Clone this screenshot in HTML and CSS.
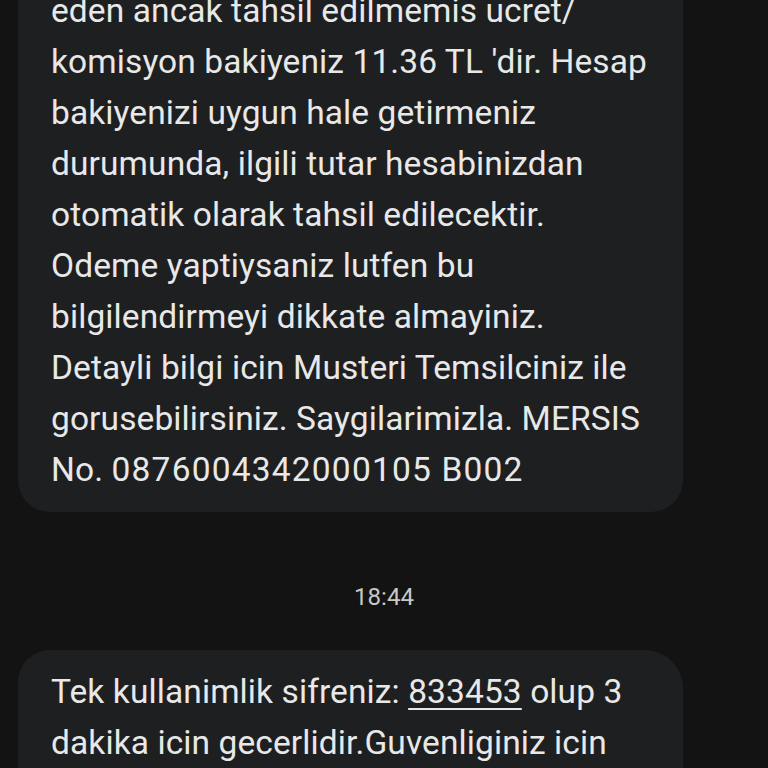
FILE: index.html
```html
<!DOCTYPE html>
<html lang="tr">
<head>
<meta charset="utf-8">
<link rel="stylesheet" href="styles.css">
</head>
<body>
<div class="thread">
  <div class="bubble first">
    <p class="msg">eden ancak tahsil edilmemis ucret/<br>komisyon bakiyeniz 11.36 TL 'dir. Hesap<br>bakiyenizi uygun hale getirmeniz<br>durumunda, ilgili tutar hesabinizdan<br>otomatik olarak tahsil edilecektir.<br>Odeme yaptiysaniz lutfen bu<br>bilgilendirmeyi dikkate almayiniz.<br>Detayli bilgi icin Musteri Temsilciniz ile<br>gorusebilirsiniz. Saygilarimizla. MERSIS<br>No. <span class="num">0876004342000105 B002</span></p>
  </div>
  <div class="time">18:44</div>
  <div class="bubble second">
    <p class="msg">Tek kullanimlik sifreniz: <span class="code">833453</span> olup 3<br>dakika icin gecerlidir.Guvenliginiz icin<br>sifrenizi kimseyle paylasmayiniz.</p>
  </div>
</div>
</body>
</html>
```
FILE: styles.css
```css
html, body {
  margin: 0;
  padding: 0;
  background: #131314;
  height: 100%;
  overflow: hidden;
}
.thread {
  display: flex;
  flex-direction: column;
  align-items: flex-start;
  padding-left: 18px;
  margin-top: -35px;
}
.bubble {
  background: #1e1f21;
  width: 665px;
  box-sizing: border-box;
  padding: 20px 20px 17px 33px;
  border-radius: 32px;
}
.bubble.second {
  padding-top: 16px;
  padding-bottom: 60px;
  border-radius: 32px 38px 32px 32px;
}
.msg {
  margin: 0;
  font-family: Roboto, "Noto Sans", sans-serif;
  font-size: 33.5px;
  letter-spacing: 0.1px;
  line-height: 51px;
  color: #e8e8e8;
  white-space: nowrap;
}
.num {
  letter-spacing: 1.2px;
}
.code {
  text-decoration: underline;
  text-decoration-thickness: 2px;
  text-underline-offset: 5px;
}
.time {
  align-self: stretch;
  margin: 70px 0 38px -18px;
  text-align: center;
  font-family: Roboto, "Noto Sans", sans-serif;
  font-size: 24px;
  line-height: 30px;
  color: #c8c8c8;
}
```
